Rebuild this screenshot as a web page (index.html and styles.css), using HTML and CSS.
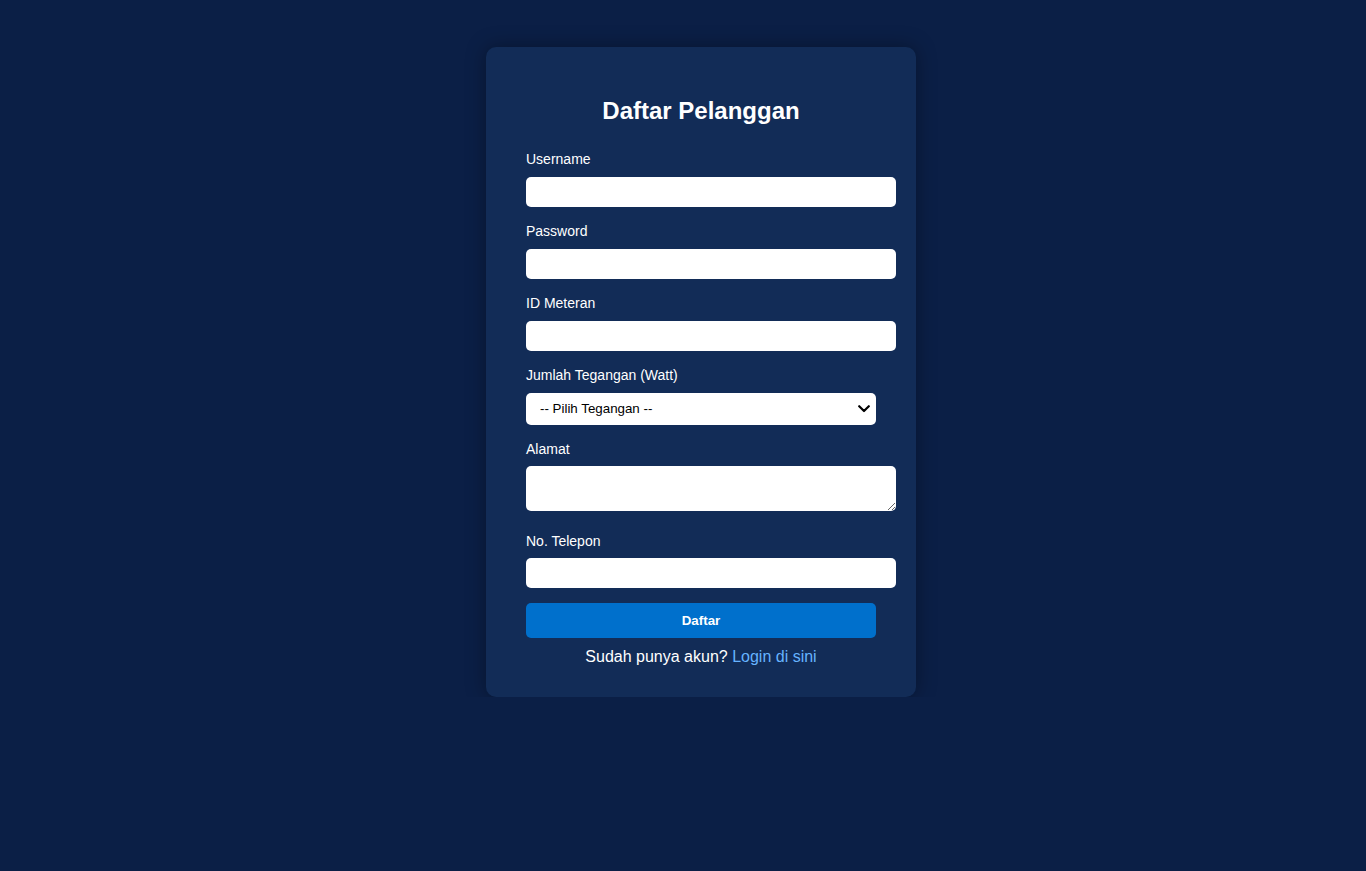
FILE: index.html
```html
<!DOCTYPE html>
<html lang="id">
<head>
<meta charset="utf-8">
<title>Daftar Pelanggan</title>
<link rel="stylesheet" href="styles.css">
</head>
<body>
<div class="page">
  <div class="card">
    <h2 class="title">Daftar Pelanggan</h2>
    <form class="form">
      <label class="label">Username</label>
      <input class="field" type="text">
      <label class="label">Password</label>
      <input class="field" type="password">
      <label class="label">ID Meteran</label>
      <input class="field" type="text">
      <label class="label">Jumlah Tegangan (Watt)</label>
      <div class="select-wrap">
        <select class="select"><option>-- Pilih Tegangan --</option></select>
        <svg class="chevron" width="12" height="8" viewBox="0 0 12 8"><path d="M1.2 1.2 L6 6 L10.8 1.2" fill="none" stroke="#000" stroke-width="2.2" stroke-linecap="round" stroke-linejoin="round"/></svg>
      </div>
      <label class="label">Alamat</label>
      <textarea class="field area"></textarea>
      <label class="label">No. Telepon</label>
      <input class="field field-last" type="text">
      <button class="btn" type="button">Daftar</button>
    </form>
    <p class="foot">Sudah punya akun? <a class="link" href="#">Login di sini</a></p>
  </div>
</div>
</body>
</html>
```
FILE: styles.css
```css
html, body {
  margin: 0;
  background: #0b1f46;
  font-family: "Liberation Sans", Arial, sans-serif;
}
.page {
  display: flex;
  justify-content: center;
  padding: 47px 0 0 36px;
}
.card {
  width: 430px;
  box-sizing: border-box;
  padding: 30px 40px;
  background: #122c57;
  border-radius: 10px;
  box-shadow: 0 0 20px rgba(0, 0, 0, 0.35);
  color: #fff;
}
.title {
  margin: 20px 0 26.3px;
  font-size: 24px;
  line-height: 28px;
  font-weight: bold;
  text-align: center;
}
.form {
  margin: 0;
}
.label {
  display: block;
  font-size: 14px;
  line-height: 16px;
  margin-bottom: 9.4px;
}
.field {
  display: block;
  width: 370px;
  height: 30px;
  box-sizing: border-box;
  border: none;
  border-radius: 5px;
  padding: 8px 10px;
  margin: 0 0 16.6px;
  font: 13.33px "Liberation Sans", Arial, sans-serif;
  background: #fff;
  color: #000;
  outline: none;
}
.area {
  height: 45px;
  margin-bottom: 21.1px;
}
.field-last {
  margin-bottom: 15.3px;
}
.select-wrap {
  position: relative;
  width: 350px;
  margin-bottom: 16.4px;
}
.select {
  appearance: none;
  -webkit-appearance: none;
  display: block;
  width: 350px;
  height: 32px;
  border: none;
  border-radius: 5px;
  padding: 0 14px;
  font: 13.33px "Liberation Sans", Arial, sans-serif;
  color: #000;
  background: #fff;
  outline: none;
}
.chevron {
  position: absolute;
  right: 6px;
  top: 12px;
  pointer-events: none;
}
.btn {
  display: block;
  width: 350px;
  height: 35px;
  border: none;
  border-radius: 5px;
  background: #0070cc;
  color: #fff;
  font: bold 13.33px "Liberation Sans", Arial, sans-serif;
  margin: 0;
  padding: 0;
}
.foot {
  margin: 10px 0 0;
  font-size: 16px;
  line-height: 18.4px;
  text-align: center;
}
.link {
  color: #66b3ff;
  text-decoration: none;
}
```
